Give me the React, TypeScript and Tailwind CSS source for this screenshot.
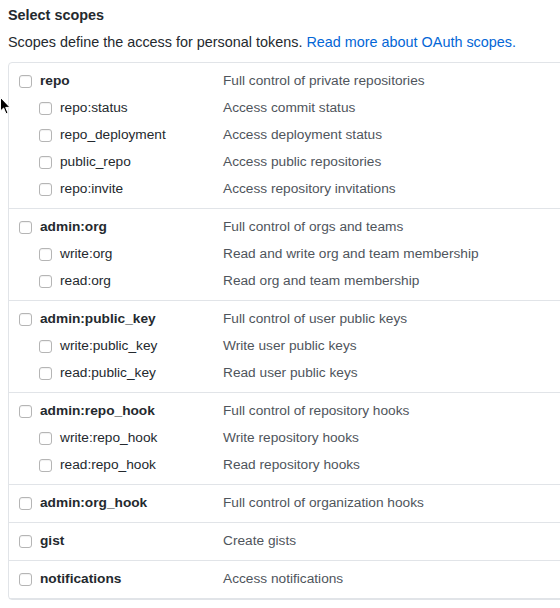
import React from "react";

type Scope = { name: string; desc: string };
type Group = { parent: Scope; children: Scope[] };

const groups: Group[] = [
    {
        parent: { name: "repo", desc: "Full control of private repositories" },
        children: [
            { name: "repo:status", desc: "Access commit status" },
            { name: "repo_deployment", desc: "Access deployment status" },
            { name: "public_repo", desc: "Access public repositories" },
            { name: "repo:invite", desc: "Access repository invitations" },
        ],
    },
    {
        parent: { name: "admin:org", desc: "Full control of orgs and teams" },
        children: [
            { name: "write:org", desc: "Read and write org and team membership" },
            { name: "read:org", desc: "Read org and team membership" },
        ],
    },
    {
        parent: { name: "admin:public_key", desc: "Full control of user public keys" },
        children: [
            { name: "write:public_key", desc: "Write user public keys" },
            { name: "read:public_key", desc: "Read user public keys" },
        ],
    },
    {
        parent: { name: "admin:repo_hook", desc: "Full control of repository hooks" },
        children: [
            { name: "write:repo_hook", desc: "Write repository hooks" },
            { name: "read:repo_hook", desc: "Read repository hooks" },
        ],
    },
    { parent: { name: "admin:org_hook", desc: "Full control of organization hooks" }, children: [] },
    { parent: { name: "gist", desc: "Create gists" }, children: [] },
    { parent: { name: "notifications", desc: "Access notifications" }, children: [] },
];

function Box() {
    return (
        <span className="inline-block w-[13px] h-[13px] shrink-0 rounded-[3px] border border-[#b5b5b5] bg-white shadow-[inset_0_1px_1px_rgba(0,0,0,0.06)]" />
    );
}

function Row({ scope, child }: { scope: Scope; child?: boolean }) {
    return (
        <div className="flex items-center h-[27px]">
            <div className={`flex items-center w-[214px] shrink-0 ${child ? "pl-[30px]" : "pl-[10px]"}`}>
                <Box />
                <span className={`ml-[8px] ${child ? "" : "font-bold"} text-[#24292e]`}>{scope.name}</span>
            </div>
            <span className="text-[#4f555c]">{scope.desc}</span>
        </div>
    );
}

export default function App() {
    return (
        <div className="relative w-[560px] h-[608px] overflow-hidden bg-white pl-2 pt-[5px] text-[13.7px] text-[#24292e] font-['Liberation_Sans',Arial,sans-serif]">
            <div className="text-[14.4px] leading-[20px] font-bold">Select scopes</div>
            <div className="mt-[7px] text-[14.4px] leading-[20px] whitespace-nowrap">
                Scopes define the access for personal tokens.{" "}
                <span className="text-[#0366d6]">Read more about OAuth scopes.</span>
            </div>
            <div className="mt-[10px] w-[600px] border border-[#e1e4e8] rounded-[4px]">
                {groups.map((g) => (
                    <div key={g.parent.name} className="py-[5px] border-b border-[#e1e4e8]">
                        <Row scope={g.parent} />
                        {g.children.map((c) => (
                            <Row key={c.name} scope={c} child />
                        ))}
                    </div>
                ))}
            </div>
            {/* mouse pointer caught in the capture */}
            <svg className="absolute left-0 top-[97px]" width="11" height="18" viewBox="0 0 11 18">
                <path d="M0.5 0.5 L0.5 14 L3.6 11 L6 16.8 L8 16 L5.7 10.4 L10 10.4 Z" fill="#000" stroke="#fff" strokeWidth="1" />
            </svg>
        </div>
    );
}
